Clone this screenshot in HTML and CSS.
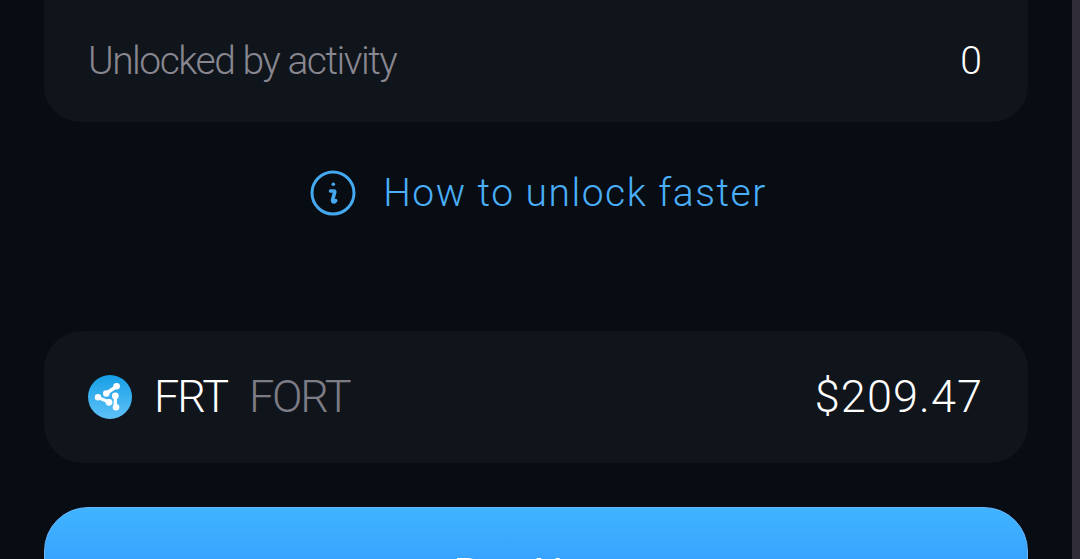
FILE: index.html
```
<!DOCTYPE html>
<html lang="en">
<head>
    <meta charset="UTF-8">
    <meta name="viewport" content="width=device-width, initial-scale=1.0">
    <title>FORT</title>
    <link rel="stylesheet" href="styles.css">
</head>

<body>
    <main class="screen">
        <section class="card unlock-card">
            <span class="label">Unlocked by activity</span>
            <span class="count">0</span>
        </section>

        <a class="unlock-link" href="#">
            <svg class="info-icon" viewBox="0 0 46 46">
                <circle cx="23" cy="23" r="21" fill="none" stroke="#45a9f0" stroke-width="3"/>
                <circle cx="23.3" cy="14.3" r="1.8" fill="#45a9f0"/>
                <path d="M20.5 21h3.500q1 0 .7 1.200l-2 7.300q-.5 2.500 1 2.500 1.300 0 2-1.400" fill="none" stroke="#45a9f0" stroke-width="3.600" stroke-linecap="round"/>
            </svg>
            <span class="unlock-text">How to unlock faster</span>
        </a>

        <section class="card token-card">
            <svg class="token-icon" viewBox="0 0 44 44">
                <defs>
                    <linearGradient id="token-fill" x1="0" y1="0" x2="0" y2="1">
                        <stop offset="0" stop-color="#169fe6"/>
                        <stop offset="1" stop-color="#5fc1f8"/>
                    </linearGradient>
                </defs>
                <circle cx="22" cy="22" r="22" fill="url(#token-fill)"/>
                <g stroke="#fff" stroke-width="3.4" fill="none">
                    <path d="M28.500 11.500 18 18.500M10 22.500l11 4.500M27.300 21v11"/>
                </g>
                <g fill="#fff">
                    <circle cx="28.600" cy="11.200" r="3.300"/>
                    <circle cx="18.300" cy="18.500" r="3.300"/>
                    <circle cx="10" cy="22.300" r="3.200"/>
                    <circle cx="21" cy="27.300" r="3.400"/>
                    <circle cx="27.300" cy="20.800" r="3.400"/>
                    <circle cx="28" cy="32.300" r="3.300"/>
                </g>
            </svg>
            <span class="symbol">FRT</span>
            <span class="name">FORT</span>
            <span class="price">$209.47</span>
        </section>

        <button class="buy-button">Buy Now</button>
    </main>
    <div class="scrollbar"></div>
</body>
</html>
```

FILE: styles.css
```
* {
    margin: 0;
    padding: 0;
    box-sizing: border-box;
}

body {
    display: flex;
    height: 559px;
    overflow: hidden;
    font-family: Roboto, sans-serif;
    font-weight: 300;
    background: #080c13;
    color: #ffffff;
}

.screen {
    flex: 1;
    display: flex;
    flex-direction: column;
    padding: 0 44px;
}

.scrollbar {
    width: 8px;
    background: #302d38;
}

.card {
    display: flex;
    flex-shrink: 0;
    align-items: center;
    background: #10141b;
}

.unlock-card {
    justify-content: space-between;
    height: 122px;
    padding: 0 46px 0 44px;
    border-radius: 0 0 36px 36px;
    font-size: 39px;
}

.label {
    color: #888790;
    letter-spacing: -1.5px;
}

.unlock-link {
    display: flex;
    flex-shrink: 0;
    align-items: center;
    justify-content: center;
    gap: 27px;
    height: 46px;
    margin-top: 48px;
    padding-left: 5px;
    color: #4aaff8;
    text-decoration: none;
}

.info-icon {
    width: 46px;
    height: 46px;
}

.unlock-text {
    font-size: 39px;
    letter-spacing: 1.5px;
}

.token-card {
    height: 132px;
    margin-top: 115px;
    padding: 0 45px 0 44px;
    border-radius: 38px;
    font-size: 45px;
}

.token-card span {
    padding-bottom: 2px;
}

.token-icon {
    width: 44px;
    height: 44px;
    margin-right: 22px;
}

.symbol {
    letter-spacing: -2px;
}

.name {
    margin-left: 22px;
    color: #7d7c85;
    letter-spacing: -2.3px;
}

.price {
    margin-left: auto;
    letter-spacing: 1.1px;
}

.buy-button {
    flex-shrink: 0;
    height: 132px;
    margin-top: 44px;
    border: 1px solid #68b5fa;
    border-radius: 44px;
    background: linear-gradient(#40b4ff, #38a4ff 50px, #2b87ff);
    color: #ffffff;
    font-family: inherit;
    font-size: 42px;
    font-weight: 400;
}
```
